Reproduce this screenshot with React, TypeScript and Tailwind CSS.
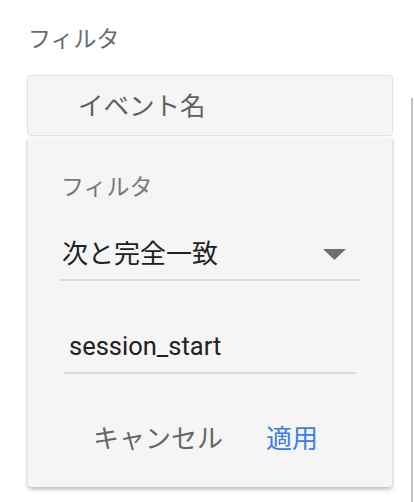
import React from "react";

export default function App() {
  return (
    <main
      className="relative w-[414px] h-[502px] overflow-hidden bg-white"
      style={{ fontFamily: "Roboto, 'Noto Sans CJK JP', sans-serif" }}
    >
      {/* scroll edge on the right */}
      <div className="absolute left-[411px] top-[98px] bottom-0 w-[2px] bg-[#c2c2c2]" />

      <div className="pt-[26px] pl-[28px] h-[75px]">
        <p className="text-[23px] leading-[28px] text-[#6b6b6b]">フィルタ</p>
      </div>

      <div className="ml-[27px] w-[366px] h-[61px] flex items-center pl-[50px] bg-[#f5f5f5] border border-[#e2e2e2] rounded-[3px]">
        <span className="text-[25.5px] leading-[30px] text-[#616161]">イベント名</span>
      </div>

      <div className="ml-[28px] mt-[2px] w-[364px] h-[349px] bg-[#f5f5f5] rounded-b-[3px] shadow-[0_2px_4px_rgba(0,0,0,0.3)]">
        <div className="pt-[36px] pl-[33px]">
          <p className="text-[23px] leading-[28px] text-[#787878]">フィルタ</p>
        </div>

        <div className="ml-[32px] mt-[27px] w-[300px] h-[52px] flex items-center justify-between pl-[2px] pr-[14px] border-b-2 border-[#dcdcdc]">
          <span className="text-[26px] leading-[30px] text-[#212121]">次と完全一致</span>
          <svg width="23" height="11" viewBox="0 0 23 11">
            <path d="M0 0 L23 0 L11.5 11 Z" fill="#6e6e6e" />
          </svg>
        </div>

        <div className="ml-[36px] mt-[39px] w-[292px] h-[54px] flex items-center pl-[5px] border-b-2 border-[#dcdcdc]">
          <span className="text-[25.5px] leading-[30px] text-[#212121]">session_start</span>
        </div>

        <div className="mt-[50px] flex items-center pl-[65px] gap-[43px]">
          <button className="text-[26px] leading-[30px] text-[#666666]">キャンセル</button>
          <button className="text-[26px] leading-[30px] text-[#3b7ee6]">適用</button>
        </div>
      </div>
    </main>
  );
}
